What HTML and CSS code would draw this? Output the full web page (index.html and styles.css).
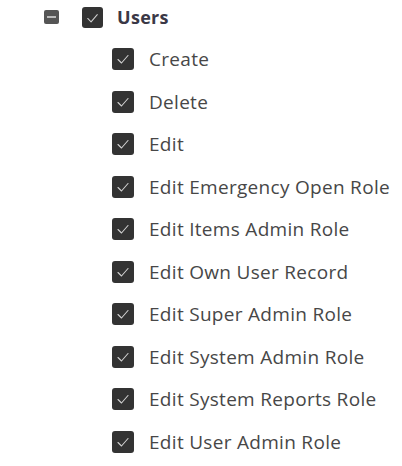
FILE: index.html
```html
<!DOCTYPE html>
<html>
<head>
<meta charset="utf-8">
<link rel="stylesheet" href="styles.css">
</head>
<body>
<div class="tree">
  <div class="root-row">
    <span class="collapse"><span class="bar"></span></span>
    <span class="cb root-cb"><svg viewBox="0 0 22 22"><path d="M6 11.5 L9.5 15 L16 7.5" /></svg></span>
    <span class="root-label">Users</span>
  </div>
  <ul class="children">
    <li><span class="cb"><svg viewBox="0 0 22 22"><path d="M6 11.5 L9.5 15 L16 7.5" /></svg></span><span class="label">Create</span></li>
    <li><span class="cb"><svg viewBox="0 0 22 22"><path d="M6 11.5 L9.5 15 L16 7.5" /></svg></span><span class="label">Delete</span></li>
    <li><span class="cb"><svg viewBox="0 0 22 22"><path d="M6 11.5 L9.5 15 L16 7.5" /></svg></span><span class="label">Edit</span></li>
    <li><span class="cb"><svg viewBox="0 0 22 22"><path d="M6 11.5 L9.5 15 L16 7.5" /></svg></span><span class="label">Edit Emergency Open Role</span></li>
    <li><span class="cb"><svg viewBox="0 0 22 22"><path d="M6 11.5 L9.5 15 L16 7.5" /></svg></span><span class="label">Edit Items Admin Role</span></li>
    <li><span class="cb"><svg viewBox="0 0 22 22"><path d="M6 11.5 L9.5 15 L16 7.5" /></svg></span><span class="label">Edit Own User Record</span></li>
    <li><span class="cb"><svg viewBox="0 0 22 22"><path d="M6 11.5 L9.5 15 L16 7.5" /></svg></span><span class="label">Edit Super Admin Role</span></li>
    <li><span class="cb"><svg viewBox="0 0 22 22"><path d="M6 11.5 L9.5 15 L16 7.5" /></svg></span><span class="label">Edit System Admin Role</span></li>
    <li><span class="cb"><svg viewBox="0 0 22 22"><path d="M6 11.5 L9.5 15 L16 7.5" /></svg></span><span class="label">Edit System Reports Role</span></li>
    <li><span class="cb"><svg viewBox="0 0 22 22"><path d="M6 11.5 L9.5 15 L16 7.5" /></svg></span><span class="label">Edit User Admin Role</span></li>
  </ul>
</div>
</body>
</html>
```
FILE: styles.css
```css
html, body {
  margin: 0;
  padding: 0;
  background: #ffffff;
}
body {
  font-family: "Open Sans", "Noto Sans", sans-serif;
  color: #444444;
}
.tree {
  padding-top: 6px;
  padding-left: 44px;
}
.root-row {
  display: flex;
  align-items: center;
  height: 22px;
}
.collapse {
  width: 15px;
  height: 14px;
  background: #555555;
  border-radius: 2px;
  display: flex;
  align-items: center;
  justify-content: center;
  margin-right: 23px;
}
.bar {
  width: 9px;
  height: 2px;
  background: #bbbbbb;
}
.cb {
  width: 22px;
  height: 22px;
  background: #333333;
  border-radius: 3px;
  display: flex;
  flex: none;
}
.cb svg {
  width: 22px;
  height: 22px;
}
.cb path {
  fill: none;
  stroke: #d0d0d0;
  stroke-width: 1.1;
  stroke-linecap: round;
  stroke-linejoin: round;
}
.root-cb {
  width: 21px;
  height: 21px;
  margin-right: 14px;
}
.root-label {
  font-weight: 700;
  font-size: 18px;
  letter-spacing: 0.3px;
  color: #3a3846;
}
.children {
  list-style: none;
  margin: 0;
  padding: 0 0 0 68px;
  margin-top: 10px;
}
.children li {
  display: flex;
  align-items: center;
  height: 42.5px;
}
.label {
  margin-left: 15px;
  font-size: 19px;
  letter-spacing: 0.3px;
  color: #474747;
}
```
